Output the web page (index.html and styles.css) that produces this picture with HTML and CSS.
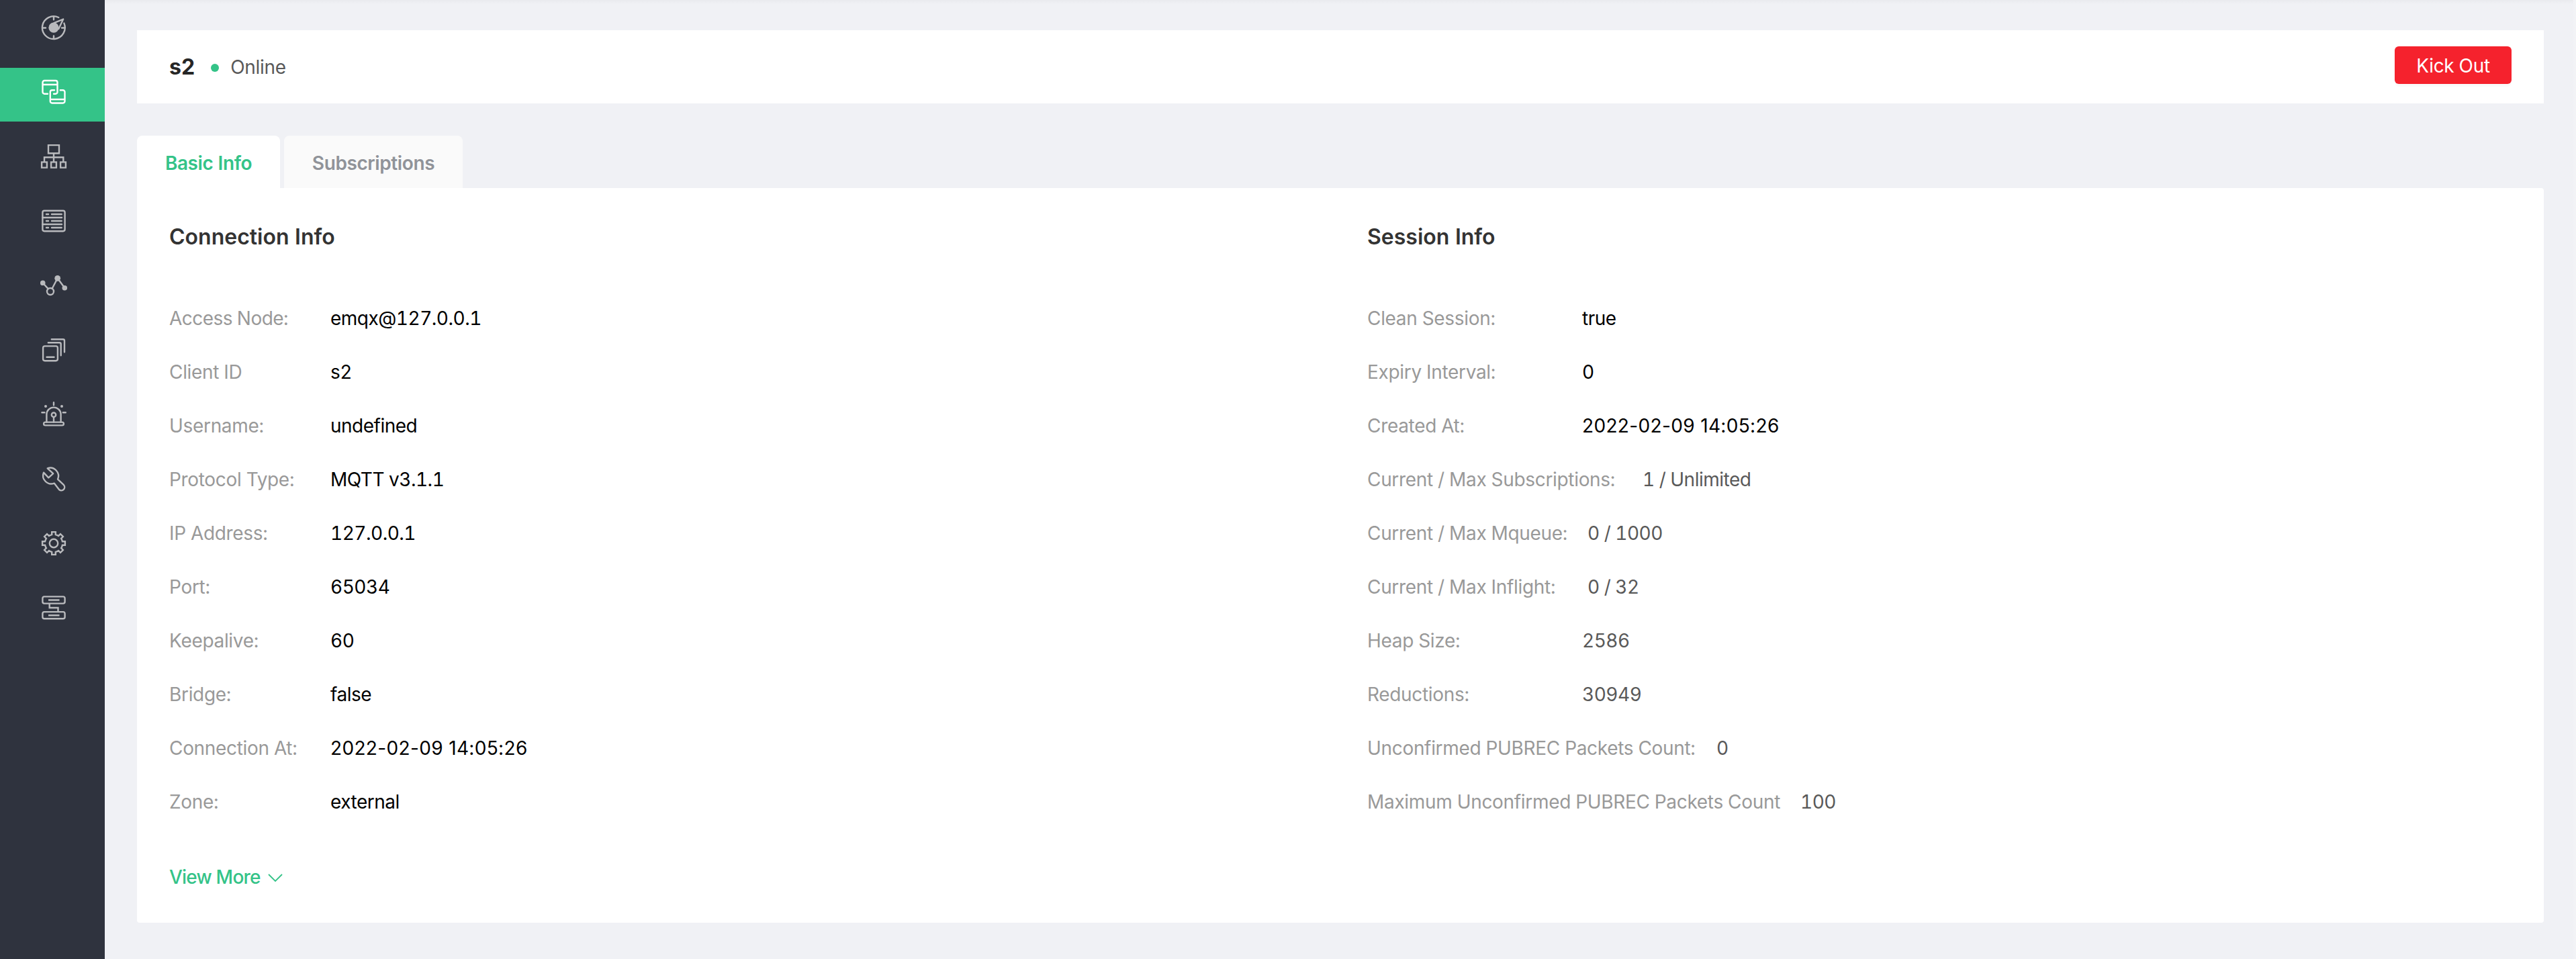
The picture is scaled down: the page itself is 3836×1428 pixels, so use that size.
FILE: index.html
```html
<!DOCTYPE html>
<html lang="en">
<head>
<meta charset="utf-8">
<title>Client s2</title>
<link rel="stylesheet" href="styles.css">
</head>
<body>
<div class="app">
  <nav class="sidebar">
    <a class="nav-item"><svg class="icon" viewBox="0 0 40 40"><path d="M27.3 5A16.9 16.9 0 1 0 35.4 13.6M20 4V8.3M20 32.5V37M3.5 20.5H8M32 20.5H36.5M20.5 13.2L34.2 7.6L27.3 22"/><circle class="solid" cx="20" cy="20.2" r="7.6"/></svg></a>
    <a class="nav-item active"><svg class="icon" viewBox="0 0 40 40"><path d="M11 22.7H6.2A2.7 2.7 0 0 1 3.5 20V5.7A2.7 2.7 0 0 1 6.2 3H22.8A2.7 2.7 0 0 1 25.5 5.7V20A2.7 2.7 0 0 1 22.8 22.7H20M3.5 9H25.5M21 17.3H17.5A2.7 2.7 0 0 0 14.8 20V33.8A2.7 2.7 0 0 0 17.5 36.5H33.8A2.7 2.7 0 0 0 36.5 33.8V20A2.7 2.7 0 0 0 33.8 17.3H29.8M14.8 31H36.5"/></svg></a>
    <a class="nav-item"><svg class="icon square" viewBox="0 0 40 40"><path d="M12 3.1H28V15.2H12ZM20 15.2V28.4M6 28.4V21.3H34.3V28.4M2.1 28.4H9.9V36.6H2.1ZM16.1 28.4H23.9V36.6H16.1ZM30.1 28.4H37.9V36.6H30.1Z"/></svg></a>
    <a class="nav-item"><svg class="icon" viewBox="0 0 40 40"><rect x="3.4" y="4.8" width="33.2" height="30.4" rx="2.6"/><path d="M3.4 15H32M3.4 25H32M9 10H12M17 10H31.7M9 20H12M17 20H31.7M9 30H12M17 30H31.7"/></svg></a>
    <a class="nav-item"><svg class="icon" viewBox="0 0 40 40"><path d="M3.7 16.3L11.8 25.1M17.6 24.7L25.7 9.3L36.3 23.7"/><circle cx="15" cy="29" r="5"/><circle class="solid" cx="3.7" cy="16.3" r="3.8"/><circle class="solid" cx="25.7" cy="9.3" r="4.4"/><circle class="solid" cx="36.3" cy="23.7" r="3.8"/></svg></a>
    <a class="nav-item"><svg class="icon" viewBox="0 0 40 40"><rect x="4.1" y="14.4" width="21.8" height="21.8" rx="2.6"/><path d="M9.5 30.7H20.5M11.8 9.3H28.6A2.1 2.1 0 0 1 30.7 11.4V28.3M16.8 4.3H33.9A2.1 2.1 0 0 1 36 6.4V23.3"/></svg></a>
    <a class="nav-item"><svg class="icon" viewBox="0 0 40 40"><rect x="5.1" y="31.6" width="29.8" height="4.8" rx="2.4"/><path d="M9.4 31.5V20.2A10.6 10.6 0 0 1 30.6 20.2V31.5M20 24.2V31.5M20 2.3V6.2M2.4 17.3H6.4M33.8 17.3H37.8"/><circle cx="20" cy="20.7" r="3.2"/><circle class="solid" cx="8" cy="8" r="2"/><circle class="solid" cx="32" cy="8" r="2"/></svg></a>
    <a class="nav-item"><svg class="icon" viewBox="0 0 40 40"><path d="M10.7 4.4A12.2 12.2 0 0 1 26 20.7L35 29.2A4.9 4.9 0 0 1 28.2 36.2L20.7 26.6A12.2 12.2 0 0 1 5 10.7L12.3 18.3L19.2 12.2Z"/></svg></a>
    <a class="nav-item"><svg class="icon square" viewBox="0 0 40 40"><path d="M17.2 7.1V3.1H22.8V7.1Q25.2 7.6 27.1 8.9L30 6.1L33.9 10L31.1 12.9Q32.4 14.8 32.9 17.2H36.9V22.8H32.9Q32.4 25.2 31.1 27.1L33.9 30L30 33.9L27.1 31.1Q25.2 32.4 22.8 32.9V36.9H17.2V32.9Q14.8 32.4 12.9 31.1L10 33.9L6.1 30L8.9 27.1Q7.6 25.2 7.1 22.8H3.1V17.2H7.1Q7.6 14.8 8.9 12.9L6.1 10L10 6.1L12.9 8.9Q14.8 7.6 17.2 7.1Z"/><circle cx="20" cy="20" r="6.2"/></svg></a>
    <a class="nav-item"><svg class="icon square" viewBox="0 0 40 40"><rect x="3.4" y="3.4" width="33.2" height="10.2" rx="2.6"/><rect x="3.4" y="26.1" width="33.2" height="10.2" rx="2.6"/><path d="M12 8.5H28.5M12 31.3H28.5M13.7 13.6V20H26.5V26.1"/></svg></a>
  </nav>
  <main class="main">
    <header class="client-bar">
      <h1 class="client-name">s2</h1>
      <span class="status-dot"></span>
      <span class="status">Online</span>
      <button class="kick">Kick Out</button>
    </header>
    <div class="tabs">
      <div class="tab selected">Basic Info</div>
      <div class="tab">Subscriptions</div>
    </div>
    <div class="panel">
      <section class="info connection">
        <h2 class="title">Connection Info</h2>
        <div class="row"><span class="label tight">Access Node:</span><span class="value">emqx@127.0.0.1</span></div>
        <div class="row"><span class="label">Client ID</span><span class="value">s2</span></div>
        <div class="row"><span class="label">Username:</span><span class="value">undefined</span></div>
        <div class="row"><span class="label">Protocol Type:</span><span class="value">MQTT v3.1.1</span></div>
        <div class="row"><span class="label">IP Address:</span><span class="value">127.0.0.1</span></div>
        <div class="row"><span class="label">Port:</span><span class="value">65034</span></div>
        <div class="row"><span class="label">Keepalive:</span><span class="value">60</span></div>
        <div class="row"><span class="label">Bridge:</span><span class="value">false</span></div>
        <div class="row"><span class="label">Connection At:</span><span class="value date">2022-02-09 14:05:26</span></div>
        <div class="row"><span class="label">Zone:</span><span class="value">external</span></div>
        <a class="more">View More <svg class="chevron" viewBox="0 0 22 14"><path d="M1 2L11 12L21 2"/></svg></a>
      </section>
      <section class="info session">
        <h2 class="title">Session Info</h2>
        <div class="row"><span class="label">Clean Session:</span><span class="value">true</span></div>
        <div class="row"><span class="label">Expiry Interval:</span><span class="value">0</span></div>
        <div class="row"><span class="label">Created At:</span><span class="value date">2022-02-09 14:05:26</span></div>
        <div class="row subs"><span class="label">Current / Max Subscriptions:</span><span class="value soft">1 / Unlimited</span></div>
        <div class="row pair"><span class="label">Current / Max Mqueue:</span><span class="value soft">0 / 1000</span></div>
        <div class="row pair"><span class="label">Current / Max Inflight:</span><span class="value soft">0 / 32</span></div>
        <div class="row"><span class="label">Heap Size:</span><span class="value soft">2586</span></div>
        <div class="row"><span class="label">Reductions:</span><span class="value soft">30949</span></div>
        <div class="row pubrec"><span class="label">Unconfirmed PUBREC Packets Count:</span><span class="value soft">0</span></div>
        <div class="row pubrec-max"><span class="label">Maximum Unconfirmed PUBREC Packets Count</span><span class="value soft">100</span></div>
      </section>
    </div>
  </main>
</div>
</body>
</html>
```
FILE: styles.css
```css
* {
  box-sizing: border-box;
}

body {
  margin: 0;
  font-family: Inter, "Liberation Sans", sans-serif;
  font-size: 28px;
  line-height: 42px;
  letter-spacing: -0.32px;
  font-variant-numeric: tabular-nums;
  color: #595959;
  background: #f0f1f5;
}

.app {
  display: flex;
  height: 1428px;
}

/* Sidebar */
.sidebar {
  flex: none;
  display: flex;
  flex-direction: column;
  gap: 16px;
  width: 156px;
  padding-top: 5px;
  background: #2f333e;
}

.nav-item {
  display: flex;
  justify-content: center;
  height: 80px;
  padding: 16px 0 0 4px;
  color: #b9babd;
}

.nav-item.active {
  color: #fff;
  background: #34c388;
}

.icon {
  width: 40px;
  height: 40px;
  fill: none;
  stroke: currentColor;
  stroke-width: 2.4;
  stroke-linecap: round;
  stroke-linejoin: round;
}

.icon.square {
  stroke-linecap: butt;
  stroke-linejoin: miter;
}

.icon .solid {
  fill: currentColor;
  stroke: none;
}

/* Page */
.main {
  flex: 1;
  min-width: 0;
  padding: 45px 44px 0 48px;
  border-right: 4px solid #f2f3f6;
  background: linear-gradient(#e9eaee, #f0f1f5 6px);
}

.client-bar {
  display: flex;
  align-items: center;
  height: 109px;
  padding: 0 48px;
  background: #fff;
}

.client-name {
  margin: 0;
  font-size: 32px;
  letter-spacing: -0.2px;
  color: #262626;
}

.status-dot {
  width: 12px;
  height: 12px;
  margin: 3px 17px 0 24px;
  border-radius: 50%;
  background: #34c388;
}

.kick {
  width: 174px;
  height: 56px;
  margin: 0 0 5px auto;
  padding: 2px 0 0;
  border: 0;
  border-radius: 6px;
  font: inherit;
  letter-spacing: inherit;
  color: #fff;
  background: #f5222d;
  box-shadow: 0 4px 0 rgba(0, 0, 0, 0.02);
}

.tabs {
  display: flex;
  gap: 6px;
  margin-top: 48px;
}

.tab {
  height: 78px;
  width: 266px;
  padding-top: 20px;
  border-radius: 8px 8px 0 0;
  text-align: center;
  font-weight: 600;
  letter-spacing: -0.4px;
  color: #909399;
  background: #fafafa;
}

.tab.selected {
  width: 213px;
  color: #34c388;
  background: #fff;
}

.panel {
  display: flex;
  height: 1094px;
  padding: 49px 0 0 48px;
  border-radius: 0 4px 4px 4px;
  background: #fff;
}

.info {
  flex: 1;
}

.info.connection {
  flex: none;
  width: 1784px;
}

.title {
  margin: 0 0 57px;
  font-size: 32px;
  line-height: 48px;
  font-weight: 600;
  letter-spacing: 0;
  color: #333;
}

.row {
  display: flex;
  align-items: center;
  height: 80px;
  white-space: nowrap;
}

.label {
  flex: none;
  width: 240px;
  color: #999;
}

.label.tight {
  letter-spacing: -0.55px;
}

.value {
  letter-spacing: -0.5px;
  color: #000;
}

.value.soft {
  color: #595959;
}

.value.date {
  letter-spacing: 0.35px;
  font-variant-numeric: normal;
}

.session .label {
  width: 320px;
}

.session .pair .label {
  width: 328px;
}

.session .subs .label {
  width: 410px;
}

.session .pubrec .label {
  width: 520px;
}

.session .pubrec-max .label {
  width: 645px;
}

.more {
  display: flex;
  align-items: center;
  margin-top: 51px;
  font-weight: 500;
  letter-spacing: -0.8px;
  color: #34c388;
}

.chevron {
  width: 22px;
  height: 14px;
  margin: 2px 0 0 11px;
  fill: none;
  stroke: currentColor;
  stroke-width: 1.8;
}
```
